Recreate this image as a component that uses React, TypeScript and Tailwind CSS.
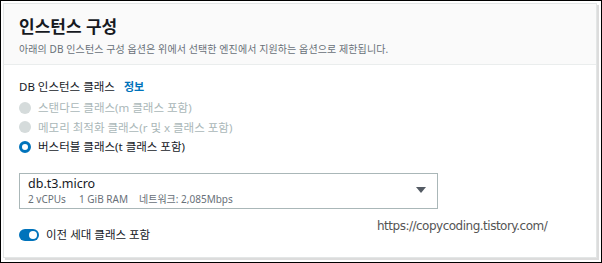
import React from 'react';

const font = "font-['Noto_Sans','Noto_Sans_CJK_KR',sans-serif]";

function Radio({ label, checked, disabled }: { label: string; checked?: boolean; disabled?: boolean }) {
  return (
    <div className="flex items-center h-[19.5px]">
      {checked ? (
        <span className="w-[12px] h-[12px] rounded-full border-[3.5px] border-[#0073bb] bg-white" />
      ) : (
        <span className="w-[12px] h-[12px] rounded-full bg-[#d5dbdb]" />
      )}
      <span
        className={`ml-[7px] text-[11.5px] leading-none ${disabled ? 'text-[#aab7b8]' : 'text-[#16191f]'}`}
      >
        {label}
      </span>
    </div>
  );
}

export default function App() {
  return (
    <div className={`relative w-[602px] h-[263px] border border-black bg-white pl-[2px] pt-[2px] ${font}`}>
      <div className="w-[594px] h-[255px] border border-[#e3e6e6] shadow-[2px_2px_0_0_#dcdcdc] bg-white">
        {/* Header */}
        <div className="h-[61px] bg-[#fafafa] border-b border-[#eaeded] pl-[15px] pt-[12px]">
          <h2 className="text-[17px] font-bold leading-[22px] text-[#16191f]">인스턴스 구성</h2>
          <p className="mt-[5px] text-[10px] leading-[12px] text-[#687078] tracking-[0.1px]">
            아래의 DB 인스턴스 구성 옵션은 위에서 선택한 엔진에서 지원하는 옵션으로 제한됩니다.
          </p>
        </div>

        {/* Body */}
        <div className="pl-[15px] pt-[13px]">
          <div className="flex items-center h-[18px]">
            <span className="text-[11.5px] text-[#16191f]">DB 인스턴스 클래스</span>
            <span className="ml-[9px] text-[11px] font-bold text-[#0073bb]">정보</span>
          </div>
          <div className="mt-[2px]">
            <Radio label="스탠다드 클래스(m 클래스 포함)" disabled />
            <Radio label="메모리 최적화 클래스(r 및 x 클래스 포함)" disabled />
            <Radio label="버스터블 클래스(t 클래스 포함)" checked />
          </div>

          {/* Select */}
          <div className="mt-[16px] w-[419px] h-[36px] border border-[#aab7b8] flex items-center pl-[8px] pr-[11px]">
            <div className="flex-1">
              <div className="text-[12.5px] leading-[16px] text-[#16191f]">db.t3.micro</div>
              <div className="flex text-[10px] leading-[14px] text-[#687078]">
                <span className="w-[51px]">2 vCPUs</span>
                <span className="w-[60px]">1 GiB RAM</span>
                <span>네트워크: 2,085Mbps</span>
              </div>
            </div>
            <svg width="10" height="7" viewBox="0 0 10 7">
              <path d="M0 0 H10 L5 6 Z" fill="#545b64" />
            </svg>
          </div>

          {/* Toggle */}
          <div className="mt-[20px] flex items-center">
            <span className="w-[20px] h-[12px] rounded-full bg-[#0073bb] flex items-center justify-end pr-[2px]">
              <span className="w-[8px] h-[8px] rounded-full bg-white" />
            </span>
            <span className="ml-[7px] text-[11.5px] leading-none text-[#16191f]">이전 세대 클래스 포함</span>
          </div>
        </div>
      </div>

      {/* Watermark */}
      <div className="absolute left-[376px] top-[216px] font-['DejaVu_Sans',sans-serif] text-[12px] text-[#555] tracking-[-0.5px]">
        https://copycoding.tistory.com/
      </div>
    </div>
  );
}
